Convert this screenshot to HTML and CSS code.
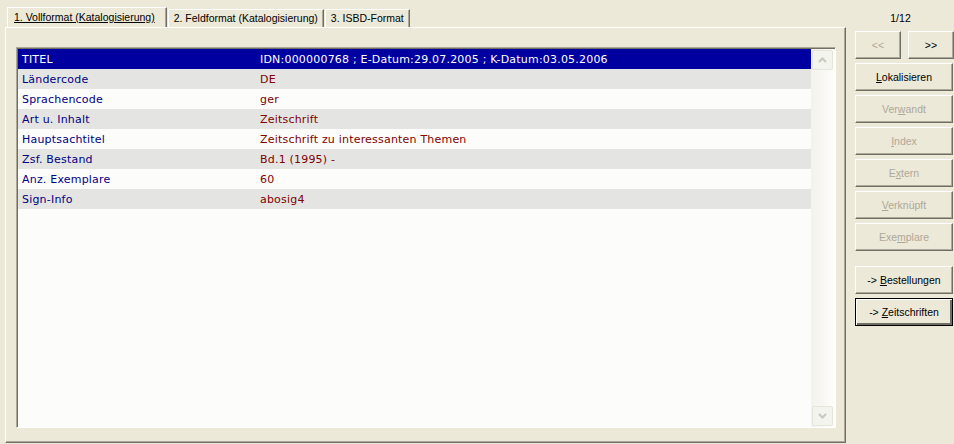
FILE: index.html
```html
<!DOCTYPE html>
<html lang="de">
<head>
    <meta charset="UTF-8">
    <title>Vollformat</title>
    <link rel="stylesheet" href="styles.css">
</head>
<body>

<div class="window">
    <div class="main">
        <div class="tab-bar">
            <div class="tab active"><u>1. Vollformat (Katalogisierung)</u></div>
            <div class="tab">2. Feldformat (Katalogisierung)</div>
            <div class="tab">3. ISBD-Format</div>
        </div>
        <div class="tab-panel">
            <div class="record-list">
                <div class="rows">
                    <div class="row head"><span class="label">TITEL</span><span class="value">IDN:000000768 ; E-Datum:29.07.2005 ; K-Datum:03.05.2006</span></div>
                    <div class="row grey"><span class="label">Ländercode</span><span class="value">DE</span></div>
                    <div class="row"><span class="label">Sprachencode</span><span class="value">ger</span></div>
                    <div class="row grey"><span class="label">Art u. Inhalt</span><span class="value">Zeitschrift</span></div>
                    <div class="row"><span class="label">Hauptsachtitel</span><span class="value">Zeitschrift zu interessanten Themen</span></div>
                    <div class="row grey"><span class="label">Zsf. Bestand</span><span class="value">Bd.1 (1995) -</span></div>
                    <div class="row"><span class="label">Anz. Exemplare</span><span class="value">60</span></div>
                    <div class="row grey"><span class="label">Sign-Info</span><span class="value">abosig4</span></div>
                </div>
                <div class="scrollbar">
                    <div class="scroll-btn">
                        <svg width="9" height="6" viewBox="0 0 9 6"><path d="M1 5 L4.5 1.5 L8 5" fill="none" stroke="#c9c8bd" stroke-width="2"/></svg>
                    </div>
                    <div class="scroll-track"></div>
                    <div class="scroll-btn">
                        <svg width="9" height="6" viewBox="0 0 9 6"><path d="M1 1 L4.5 4.5 L8 1" fill="none" stroke="#c9c8bd" stroke-width="2"/></svg>
                    </div>
                </div>
            </div>
        </div>
    </div>

    <div class="side">
        <div class="counter">1/12</div>
        <div class="nav-pair">
            <button class="btn nav" disabled>&lt;&lt;</button>
            <button class="btn nav">&gt;&gt;</button>
        </div>
        <button class="btn"><u>L</u>okalisieren</button>
        <button class="btn" disabled>Ver<u>w</u>andt</button>
        <button class="btn" disabled><u>I</u>ndex</button>
        <button class="btn" disabled>E<u>x</u>tern</button>
        <button class="btn" disabled><u>V</u>erknüpft</button>
        <button class="btn" disabled>Exe<u>m</u>plare</button>
        <button class="btn spaced">-&gt; <u>B</u>estellungen</button>
        <button class="btn default">-&gt; <u>Z</u>eitschriften</button>
    </div>
</div>

</body>
</html>
```

FILE: styles.css
```css
body {
    margin: 0;
    padding: 0;
    background-color: #ece9d8;
    font-family: "Liberation Sans", Arial, sans-serif;
    font-size: 10.5px;
    color: #000;
}
.window {
    display: flex;
    width: 954px;
    height: 444px;
    overflow: hidden;
}
.main {
    width: 841px;
    padding-left: 5px;
    display: flex;
    flex-direction: column;
}
.tab-bar {
    display: flex;
    padding-top: 9px;
    padding-left: 2px;
    height: 18px;
    align-items: flex-end;
}
.tab {
    height: 17px;
    line-height: 17px;
    padding: 0 5px;
    border-top: 1px solid #fff;
    border-left: 1px solid #fff;
    border-right: 1px solid #716f64;
    box-shadow: inset -1px 0 #aca899;
    margin-right: 1px;
    white-space: nowrap;
}
.tab.active {
    height: 19px;
    line-height: 18px;
    margin-top: -2px;
    padding: 0 11px 0 6px;
}
.tab-panel {
    flex: 1;
    border-top: 1px solid #fff;
    border-left: 1px solid #fff;
    border-right: 1px solid #716f64;
    border-bottom: 1px solid #716f64;
    box-shadow: inset -1px -1px #aca899;
    padding: 19px 9px 13px 10px;
    margin-bottom: 1px;
}
.record-list {
    height: 378px;
    display: flex;
    background: #fcfdfb;
    border-top: 1px solid #aca899;
    border-left: 1px solid #aca899;
    border-right: 1px solid #fff;
    border-bottom: 1px solid #fff;
    box-shadow: inset 1px 1px #716f64;
    padding: 1px 0 0 1px;
}
.rows {
    flex: 1;
    font-family: "DejaVu Sans", Verdana, sans-serif;
    font-size: 11px;
    letter-spacing: 0.2px;
}
.row {
    display: flex;
    height: 18px;
    line-height: 18px;
    padding-top: 2px;
    background: #fcfdfb;
}
.row.grey {
    background: #e4e5e3;
}
.row.head {
    background: #0000a0;
    color: #fff;
}
.label {
    width: 238px;
    padding-left: 4px;
    color: #000080;
}
.value {
    color: #800000;
    white-space: nowrap;
}
.row.head .label,
.row.head .value {
    color: #fff;
}
.scrollbar {
    width: 21px;
    display: flex;
    flex-direction: column;
    background: linear-gradient(to right, #f3f2ec, #fdfdfa);
    padding: 1px 2px 1px 1px;
}
.scroll-btn {
    height: 18px;
    border: 1px solid #e6e5dc;
    border-radius: 2px;
    background: #f4f4ef;
    display: flex;
    align-items: center;
    justify-content: center;
}
.scroll-track {
    flex: 1;
}
.side {
    width: 99px;
    padding-left: 9px;
    display: flex;
    flex-direction: column;
}
.counter {
    text-align: center;
    height: 24px;
    line-height: 24px;
    padding-top: 6px;
    padding-right: 8px;
    margin-bottom: 1px;
}
.nav-pair {
    display: flex;
    justify-content: space-between;
    margin-bottom: 4px;
}
.btn {
    width: 98px;
    height: 28px;
    margin-bottom: 4px;
    font-family: "Liberation Sans", Arial, sans-serif;
    font-size: 10.5px;
    color: #000;
    background: #ece9d8;
    border-top: 1px solid #fff;
    border-left: 1px solid #fff;
    border-right: 1px solid #716f64;
    border-bottom: 1px solid #716f64;
    box-shadow: inset -1px -1px #aca899;
    padding: 0;
}
.btn.nav {
    width: 46px;
    margin-bottom: 0;
}
.btn:disabled {
    color: #aca899;
}
.btn.spaced {
    margin-top: 11px;
}
.btn.default {
    border: 1px solid #000;
    box-shadow: inset 1px 1px #fff, inset -2px -2px #716f64;
}
```
